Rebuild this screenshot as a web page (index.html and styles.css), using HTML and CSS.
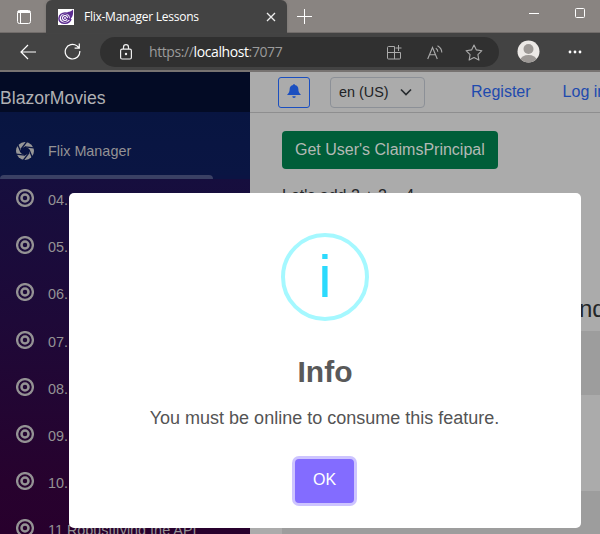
FILE: index.html
```html
<!DOCTYPE html>
<html lang="en">
<head>
<meta charset="utf-8">
<title>Flix-Manager Lessons</title>
<link rel="stylesheet" href="styles.css">
</head>
<body>
<svg width="0" height="0" class="defs"><symbol id="target" viewBox="0 0 18 18"><g fill="none" stroke="currentColor"><circle cx="9" cy="9" r="7.900" stroke-width="2.300"/><circle cx="9" cy="9" r="3.500" stroke-width="2.500"/></g></symbol></svg>
<header class="tabs">
  <svg class="tab-menu" width="14" height="14" viewBox="0 0 14 14" fill="none" stroke="#fff"><rect x=".5" y=".5" width="13" height="13" rx="2"/><path d="M1 2.500h12M3.500 3v10M1 1.500h12"/></svg>
  <div class="tab">
    <svg width="16" height="16" viewBox="0 0 16 16"><path fill="#fff" d="M0 0h16v16H0z"/><path fill="#5c2d91" d="M9 3c3 .2 4.500-1 6-2.500.5 3-.1 6.500-1.500 8.500L12 6z"/><g fill="none" stroke="#5c2d91"><path stroke-width="1.500" d="M13 10c-1 3-4 4.500-7 4.200C2.500 14 .6 11.500 1 9c.4-3 3-5 6-5 3.500 0 5.500 2 5.500 4.500 0 2-2.500 2.500-3 .5"/><circle cx="7" cy="9" r="3.600"/><circle cx="7" cy="9" r="1.500"/></g></svg>
    <span class="tab-title">Flix-Manager Lessons</span>
    <svg class="close" width="10" height="10" viewBox="0 0 10 10" stroke="#eee" stroke-width="1.300"><path d="M1 1l8 8M9 1L1 9"/></svg>
  </div>
  <svg class="plus" width="15" height="15" viewBox="0 0 15 15" stroke="#fff"><path d="M7.500 0v15M0 7.500h15"/></svg>
  <svg class="min" width="10" height="10" viewBox="0 0 10 10" stroke="#fff"><path d="M0 5.500h10"/></svg>
  <svg class="max" width="10" height="10" viewBox="0 0 10 10" fill="none" stroke="#fff"><rect x=".5" y=".5" width="9" height="9" rx="1"/></svg>
</header>
<div class="toolbar">
  <svg class="back" width="16" height="16" viewBox="0 0 16 16" fill="none" stroke="#fff" stroke-width="1.200"><path d="M16 8H1M8 1L1 8l7 7"/></svg>
  <svg class="reload" width="17" height="17" viewBox="0 0 17 17" fill="none" stroke="#fff" stroke-width="1.200"><path d="M15.800 8A7.300 7.300 0 1 1 13 2.900L15.200 5M15.300 .5V5.200H10.600"/></svg>
  <div class="address">
    <svg width="12" height="16" viewBox="0 0 12 16" fill="none" stroke="#eee" stroke-width="1.200"><rect x=".6" y="5.200" width="10.800" height="9.800" rx="1.500"/><path d="M3.500 5V3.200a2.500 2.500 0 0 1 5 0V5"/><circle cx="6" cy="10" r=".6" fill="#fff"/></svg>
    <span class="url">https://<b>localhost</b>:7077</span>
    <svg class="apps" width="15" height="15" viewBox="0 0 15 15" fill="none" stroke="#aaa"><path d="M7.500 1.500h-6a1 1 0 0 0-1 1v10.500a1 1 0 0 0 1 1h11a1 1 0 0 0 1-1V7.500H.5M7.500 1.500V14M11.500 0v6M8.500 3h6"/></svg>
    <svg class="read" width="16" height="15" viewBox="0 0 16 15" fill="none" stroke="#aaa" stroke-width="1.100"><path d="M.7 14L5.500 2.500 10.300 14M2.500 9.800h6M8.800 3.300c1.300.9 2 2 2 3.500M10.500.700c2.700 1.500 4.300 3.600 4.300 6.800"/></svg>
    <svg class="star" width="18" height="17" viewBox="0 0 18 17" fill="none" stroke="#aaa" stroke-width="1.100" stroke-linejoin="round"><path d="M9 1l2.400 4.900 5.500.8-4 3.900 1 5.500L9 13.500l-4.900 2.600 1-5.500-4-3.900 5.500-.8z"/></svg>
  </div>
  <svg class="avatar" width="23" height="23" viewBox="0 0 23 23"><clipPath id="head"><circle cx="11.500" cy="11.500" r="11"/></clipPath><g clip-path="url(#head)"><path fill="#ece9e6" d="M0 0h23v23H0z"/><g fill="#9d9996"><circle cx="11.500" cy="9" r="5"/><ellipse cx="11.500" cy="20" rx="8" ry="5"/></g></g></svg>
  <svg class="more" width="14" height="4" viewBox="0 0 14 4" fill="#fff"><circle cx="2" cy="2" r="1.400"/><circle cx="7" cy="2" r="1.400"/><circle cx="12" cy="2" r="1.400"/></svg>
</div>
<div class="app">
  <aside class="sidebar">
    <div class="brand">BlazorMovies</div>
    <div class="lead">
      <svg width="18" height="18" viewBox="0 0 18 18"><circle cx="9" cy="9" r="9" fill="#979797"/><path fill="#091442" d="M9 4.500l4 2.300.2 4.300L9 13.500l-4-2.300-.2-4.400z"/><path fill="none" stroke="#091442" stroke-width="1.300" d="M5 7.200L10.500 0M9 4.900l9 1M13 7.500L16.500 16M13 10.800L7.500 18M9 13.100L0 12.100M5 10.500L1.500 2"/></svg>
      <span>Flix Manager</span>
    </div>
    <div class="bar"></div>
    <nav>
      <div class="item"><svg><use href="#target"/></svg><span>04.</span></div>
      <div class="item"><svg><use href="#target"/></svg><span>05.</span></div>
      <div class="item"><svg><use href="#target"/></svg><span>06.</span></div>
      <div class="item"><svg><use href="#target"/></svg><span>07.</span></div>
      <div class="item"><svg><use href="#target"/></svg><span>08.</span></div>
      <div class="item"><svg><use href="#target"/></svg><span>09.</span></div>
      <div class="item"><svg><use href="#target"/></svg><span>10.</span></div>
      <div class="item"><svg><use href="#target"/></svg><span>11 Robustifying the API</span></div>
    </nav>
  </aside>
  <main>
    <div class="top">
      <div class="bell"><svg width="14" height="14" viewBox="0 0 16 16" fill="#1b4fc0"><path d="M8 16a2 2 0 0 0 2-2H6a2 2 0 0 0 2 2M9 1.100a1 1 0 1 0-2 0A5 5 0 0 0 3 6c0 2.500-.7 4.500-3 6.500h16C13.700 10.500 13 8.500 13 6A5 5 0 0 0 9 1.100"/></svg></div>
      <div class="lang">en (US)<svg width="12" height="8" viewBox="0 0 12 8" fill="none" stroke="#272b2f" stroke-width="1.700"><path d="M1 1.500l5 5 5-5"/></svg></div>
      <a class="register">Register</a><a>Log in</a>
    </div>
    <div class="content">
      <div class="claims">Get User's ClaimsPrincipal</div>
      <p>Let's add 2 + 2 = 4</p>
      <h3>nd</h3>
      <div class="table"><div></div><div></div><div></div></div>
    </div>
  </main>
</div>
<div class="modal">
  <div class="info"><span>i</span></div>
  <h2>Info</h2>
  <p>You must be online to consume this feature.</p>
  <button>OK</button>
</div>
</body>
</html>
```
FILE: styles.css
```css
* { box-sizing: border-box; }
body { margin: 0; width: 600px; height: 534px; overflow: hidden; position: relative; font-family: "Liberation Sans", Arial, sans-serif; font-size: 16px; background: #ababab; }
svg { flex: none; display: block; }
a, span, p, h2, h3 { white-space: nowrap; }
.defs { position: absolute; }
.tabs { height: 33px; display: flex; background: #898481; border-bottom: 1px solid #716c6a; }
.tab-menu { margin: 10px 0 0 17px; }
.tab { width: 241px; height: 33px; margin-left: 15px; padding: 1px 11px 0 12px; background: #434343; border-radius: 6px 6px 0 0; display: flex; align-items: center; box-shadow: 0 0 3px #5555; }
.tab-title { font: 12px/18px "Open Sans", sans-serif; letter-spacing: -.26px; color: #fff; margin-left: 10px; }
.close { margin-left: auto; }
.plus { margin: 9px 0 0 10px; }
.min { margin: 8px 0 0 auto; }
.max { margin: 8px 15px 0 36px; }
.toolbar { height: 39px; display: flex; align-items: center; background: #434343; border-bottom: 2px solid #777371; }
.back { margin-left: 20px; }
.reload { margin-left: 28px; }
.address { width: 399px; height: 30px; margin-left: 19px; margin-top: 1px; padding-left: 20px; border-radius: 15px; background: #303030; display: flex; align-items: center; }
.url { font: 14px/20px "Open Sans", sans-serif; letter-spacing: -.4px; color: #9b9b9b; margin-left: 17px; width: 134px; }
.url b { color: #fff; font-weight: 400; }
.apps { margin-left: 104px; }
.read { margin-left: 25px; }
.star { margin-left: 22px; }
.avatar { margin-left: 18px; }
.more { margin-left: 28px; }
.app { display: flex; height: 462px; }
.sidebar { width: 250px; flex: none; color: #949294; font-size: 14.4px; }
.brand { height: 40px; padding-top: 15px; background: #030b25; color: #b0b1b4; font-size: 17.6px; line-height: 23px; }
.lead { height: 63px; padding: 15px 0 0 16px; display: flex; align-items: center; gap: 14px; background: linear-gradient(#081541, #0a1543); }
.bar { height: 4px; background: #0b1443; }
.bar::before { content: ""; display: block; width: 213px; height: 4px; background: #3a4064; border-radius: 4px 4px 0 0; }
nav { height: 355px; padding-top: 2px; overflow: hidden; background: linear-gradient(#160e3e, #1e0938 40%, #27022e 85%, #28002d); }
.item { height: 47.2px; display: flex; align-items: flex-start; padding: 8px 0 0 16px; gap: 14px; }
.item svg { width: 18px; height: 18px; }
.item span { line-height: 20px; margin-top: 1px; }
main { flex: 1; min-width: 0; background: #ababab; }
.top { height: 41px; padding-left: 28px; border-bottom: 1px solid #8e8e8f; display: flex; align-items: center; color: #1e4aae; }
.bell { flex: none; width: 32px; height: 31px; border: 1px solid #1b4fc0; border-radius: 3px; display: flex; align-items: center; justify-content: center; padding-bottom: 3px; }
.lang { flex: none; width: 95px; height: 31px; margin-left: 20px; padding: 0 0 1px 8px; border: 1px solid #8c9097; border-radius: 4px; display: flex; align-items: center; gap: 11px; color: #202225; font-size: 14.400px; }
.register { margin-left: 46px; margin-right: 32px; }
.content { padding: 18px 0 0 32px; color: #242628; }
.claims { width: 216px; height: 38px; border-radius: 4px; background: #005e39; color: #b3b9b5; padding-left: 13px; line-height: 37px; white-space: nowrap; }
.content p { margin: 16px 0 0; line-height: 22px; }
h3 { margin: 88px 0 0 297px; font-size: 24px; line-height: 28px; font-weight: 400; }
.table { margin-top: 8px; }
.table div { height: 64px; background: #9d9d9d; }
.table div:nth-child(2) { height: 96px; background: #ababab; }
.modal { position: absolute; left: 69px; top: 193px; width: 512px; height: 335px; background: #fff; border-radius: 5px; padding-top: 40px; display: flex; flex-direction: column; align-items: center; }
.info { width: 88px; height: 88px; border: 4px solid #a5f8ff; border-radius: 50%; color: #2cdafd; font-size: 60px; line-height: 80px; text-align: center; }
.modal h2 { margin: 34px 0 0; font-size: 30px; line-height: 34px; color: #595959; }
.modal p { margin: 17px 1px 0 0; font-size: 18px; line-height: 24px; color: #545454; }
.modal button { margin: 29px 1px 0 0; width: 59px; height: 44px; border: 0; border-radius: 4px; background: #836cff; box-shadow: 0 0 0 3px #cdc4ff; color: #fff; font: 16px "Liberation Sans", Arial, sans-serif; padding: 0 0 3px; }
```
